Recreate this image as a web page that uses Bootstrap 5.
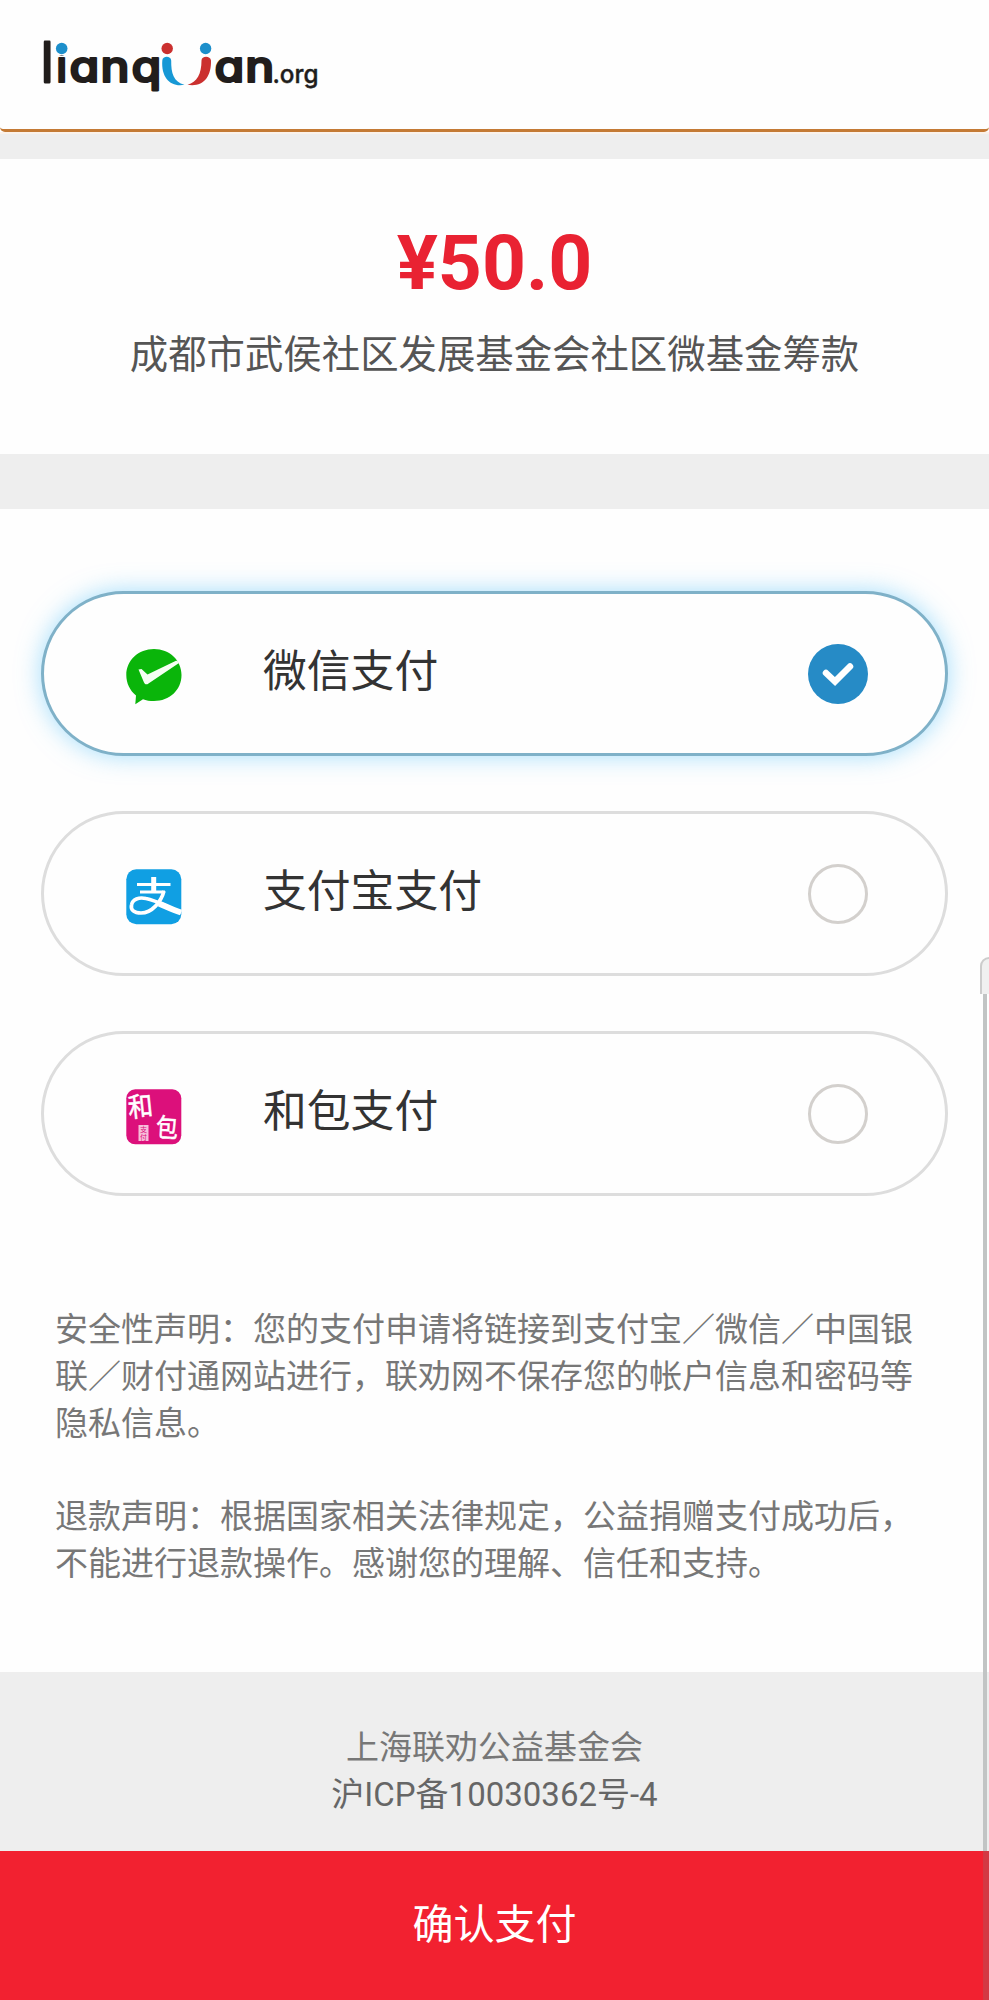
<!DOCTYPE html>
<html lang="zh-CN">
<head>
<meta charset="utf-8">
<meta name="viewport" content="width=device-width, initial-scale=1">
<title>联劝网支付</title>
<link href="https://cdn.jsdelivr.net/npm/bootstrap@5.3.0/dist/css/bootstrap.min.css" rel="stylesheet">
<style>
body{font-family:Roboto,"Noto Sans CJK SC",sans-serif;color:#333;background:#fefefe;height:2000px;overflow:hidden}
.topbar{height:132px;border-bottom:3px solid #c47a35;border-radius:0 0 5px 5px;background:#fefefe}
.topbar svg{display:block}
.top-wrap{background:#fefefe}
.strip{background:#eee}
.strip-a{height:27px;border-top:2px solid #fbf2ea}
.strip-b{height:55px}
.amount{height:295px;padding-top:62px}
.price{font-size:76.800px;font-weight:700;line-height:84px;color:#e92232}
.project{font-size:38.4px;line-height:50px;color:#555;margin-top:25px}
.methods{padding:82px 41px 0;gap:55px}
.method{height:165px;border:3px solid #ddd;border-radius:83px;padding:0 77px 0 82px;background:#fefefe;cursor:pointer}
.method.chosen{border-color:#7fb1c8;box-shadow:0 0 24px rgba(90,195,250,.55)}
.logo-pay{width:56px;height:56px;margin-top:6px;overflow:visible}
.label-pay{font-size:43.8px;line-height:60px;margin-left:81px;margin-top:-3px;color:#333}
.dot{width:60px;height:60px;border:3px solid #d3d0cd;border-radius:50%}
.dot.on{border:0;background:#268bc6}
.notes{padding:111px 70px 0 55px;font-size:33px;line-height:46.8px;color:#777}
.notes p{margin-bottom:46.8px}
.foot{height:179px;padding-top:53px;font-size:33px;line-height:46.7px;color:#777}
.foot div+div{color:#666}
.pay-btn{height:149px;background:#f22130;color:#fff;font-size:41px;border-radius:0;border:0;padding:1px 0 0}
.pay-btn:hover{background:#f22130;color:#fff}
.sb-thumb{position:absolute;left:980px;top:957px;width:14px;height:37px;border:2px solid #ccc;border-bottom:0;border-radius:9px 0 0 0;background:#f0f0f0}
.sb-line{position:absolute;left:983px;top:994px;width:4px;height:1006px;background:#c1c4c4}
.sb-line::after{content:"";position:absolute;left:0;bottom:0;width:6px;height:149px;background:#d33943}
</style>
</head>
<body class="d-flex flex-column position-relative">
<div class="top-wrap"><header class="topbar">
<svg width="340" height="128" viewBox="0 0 340 128" role="img" aria-label="lianquan.org">
  <g font-family="Inter,sans-serif" font-weight="500" fill="#211d1c" stroke="#211d1c" stroke-width="2.200" stroke-linejoin="round" style="font-feature-settings:'cv11' 1,'ss03' 0">
    <text font-size="43" transform="translate(41.800 82) scale(1 1.29)">l</text>
    <text y="82" font-size="43" x="56.2">i</text>
    <g transform="scale(1.120 1)">
      <text y="82" font-size="43" x="62 89.700 117.400">anq</text>
      <text y="82" font-size="43" x="191.500 219">an</text>
    </g>
    <text y="82.5" x="272.5" font-size="25.500" stroke-width=".4" textLength="46" lengthAdjust="spacingAndGlyphs">.org</text>
  </g>
  <rect x="56" y="41" width="12" height="14" fill="#fefefe"/>
  <circle cx="61.7" cy="48.5" r="5.8" fill="#1d8fcb"/>
  <circle cx="167.2" cy="48.5" r="5.7" fill="#cb302f"/>
  <circle cx="205.6" cy="48.5" r="5.7" fill="#1d8fcb"/>
  <path d="M162.3 60.5C162.5 55.5 171 55.5 171.2 60.5C171 73 173.5 82 184.5 84.8C171 87.500 161 78 162.300 60.500Z" fill="#1798d5"/>
  <path d="M201.500 60.500C201.500 55.500 210.500 55.500 211 60.500C211.500 77 203 87.500 187.500 84.800C197 82 201.500 74 201.500 60.500Z" fill="#cb302f"/>
</svg>
</header></div>
<div class="strip strip-a"></div>
<section class="amount text-center">
  <div class="price">¥50.0</div>
  <div class="project">成都市武侯社区发展基金会社区微基金筹款</div>
</section>
<div class="strip strip-b"></div>
<main class="flex-grow-1">
  <div class="methods d-flex flex-column">
    <div class="method chosen d-flex align-items-center">
      <svg class="logo-pay" viewBox="0 0 56 56"><path d="M28 0C43.500 0 55.500 11.300 55.500 26C55.500 41 43.500 52 28 52C24 52 20 51.500 17 50.200L9.300 55.300L10 46.500C4 41.500.3 34.500.3 26C.3 11.300 12.500 0 28 0Z" fill="#0ab50a"/><path d="M12.500 20.500L15.500 20L21.500 25.500L50 11.700C51.500 11.500 52.500 12.500 53 14L22.500 34.500C20.500 36 19 35.500 18 33.500Z" fill="#f5fff2"/></svg>
      <span class="label-pay">微信支付</span>
      <span class="dot on ms-auto"><svg class="d-block" width="60" height="60" viewBox="0 0 60 60" fill="none" stroke="#fff" stroke-width="6.500" stroke-linecap="round" stroke-linejoin="miter"><path d="M18 29L27 37.500L42 22.500"/></svg></span>
    </div>
    <div class="method d-flex align-items-center">
      <svg class="logo-pay" viewBox="0 0 56 56"><rect width="55" height="55" x=".3" y=".3" rx="10" fill="#109fe3"/><g fill="none" stroke="#fff"><path d="M27.700 8V24" stroke-width="5"/><path d="M11 15.500H44.500M14 23H39" stroke-width="3"/><path d="M38 22C35 33 26 44 15 44C8 44 4.500 41 5.500 36C6.500 30 13 28 20 29.500C31 31.500 41 38 55 43.500" stroke-width="3.700"/><path d="M33 34.500C40 37.500 46 40.500 55 43.500" stroke-width="6"/></g></svg>
      <span class="label-pay">支付宝支付</span>
      <span class="dot ms-auto"></span>
    </div>
    <div class="method d-flex align-items-center">
      <svg class="logo-pay" viewBox="0 0 56 56"><rect width="55" height="55" x=".3" y=".3" rx="9" fill="#dc107b"/><g fill="#fff" stroke="#fff" stroke-width=".5" font-family="'Noto Sans CJK SC',sans-serif"><text font-size="25" transform="translate(3 28.500) rotate(-6) scale(1 1.080)">和</text><text font-size="22" transform="translate(29.500 47.500) rotate(3) scale(1 1.180)">包</text></g><rect x="12.500" y="36" width="10" height="16" fill="#f7bdda"/><g font-family="'Noto Sans CJK SC',sans-serif" font-size="7" fill="#dc107b"><text x="14" y="43">支</text><text x="14" y="50.500">付</text></g></svg>
      <span class="label-pay">和包支付</span>
      <span class="dot ms-auto"></span>
    </div>
  </div>
  <div class="notes">
    <p>安全性声明：您的支付申请将链接到支付宝／微信／中国银<br>联／财付通网站进行，联劝网不保存您的帐户信息和密码等<br>隐私信息。</p>
    <p class="mb-0">退款声明：根据国家相关法律规定，公益捐赠支付成功后，<br>不能进行退款操作。感谢您的理解、信任和支持。</p>
  </div>
</main>
<footer class="strip foot text-center"><div>上海联劝公益基金会</div><div>沪ICP备10030362号-4</div></footer>
<button class="btn pay-btn w-100" type="button">确认支付</button>
<div class="sb-thumb"></div><div class="sb-line"></div>
<script src="https://cdn.jsdelivr.net/npm/bootstrap@5.3.0/dist/js/bootstrap.bundle.min.js"></script>
</body>
</html>
